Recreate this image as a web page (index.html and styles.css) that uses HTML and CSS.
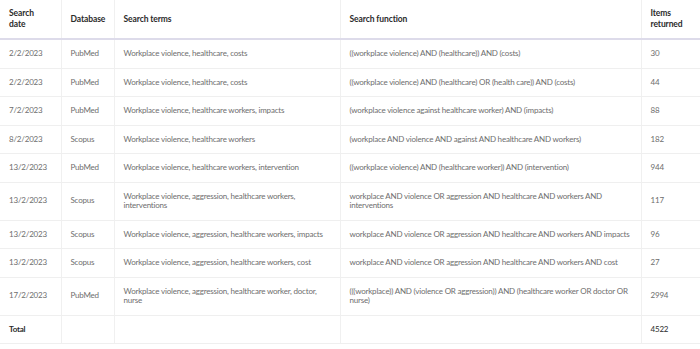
FILE: index.html
```html
<!DOCTYPE html>
<html lang="en">
<head>
<meta charset="utf-8">
<title>Search results</title>
<link rel="stylesheet" href="styles.css">
</head>
<body>
<table class="results">
  <colgroup>
    <col class="c-date">
    <col class="c-db">
    <col class="c-terms">
    <col class="c-func">
    <col class="c-items">
  </colgroup>
  <thead>
    <tr>
      <th>Search date</th>
      <th>Database</th>
      <th>Search terms</th>
      <th>Search function</th>
      <th>Items returned</th>
    </tr>
  </thead>
  <tbody>
    <tr><td>2/2/2023</td><td>PubMed</td><td>Workplace violence, healthcare, costs</td><td>((workplace violence) AND (healthcare)) AND (costs)</td><td>30</td></tr>
    <tr><td>2/2/2023</td><td>PubMed</td><td>Workplace violence, healthcare, costs</td><td>((workplace violence) AND (healthcare) OR (health care)) AND (costs)</td><td>44</td></tr>
    <tr><td>7/2/2023</td><td>PubMed</td><td>Workplace violence, healthcare workers, impacts</td><td>(workplace violence against healthcare worker) AND (impacts)</td><td>88</td></tr>
    <tr><td>8/2/2023</td><td>Scopus</td><td>Workplace violence, healthcare workers</td><td>(workplace AND violence AND against AND healthcare AND workers)</td><td>182</td></tr>
    <tr><td>13/2/2023</td><td>PubMed</td><td>Workplace violence, healthcare workers, intervention</td><td>((workplace violence) AND (healthcare worker)) AND (intervention)</td><td>944</td></tr>
    <tr><td>13/2/2023</td><td>Scopus</td><td>Workplace violence, aggression, healthcare workers, interventions</td><td>workplace AND violence OR aggression AND healthcare AND workers AND interventions</td><td>117</td></tr>
    <tr><td>13/2/2023</td><td>Scopus</td><td>Workplace violence, aggression, healthcare workers, impacts</td><td>workplace AND violence OR aggression AND healthcare AND workers AND impacts</td><td>96</td></tr>
    <tr><td>13/2/2023</td><td>Scopus</td><td>Workplace violence, aggression, healthcare workers, cost</td><td>workplace AND violence OR aggression AND healthcare AND workers AND cost</td><td>27</td></tr>
    <tr><td>17/2/2023</td><td>PubMed</td><td>Workplace violence, aggression, healthcare worker, doctor, nurse</td><td>(((workplace)) AND (violence OR aggression)) AND (healthcare worker OR doctor OR nurse)</td><td>2994</td></tr>
    <tr class="total"><td class="strong">Total</td><td></td><td></td><td></td><td class="sum">4522</td></tr>
  </tbody>
</table>
</body>
</html>
```
FILE: styles.css
```css
html, body {
  margin: 0;
  padding: 0;
  background: #ffffff;
}

.results {
  width: 700px;
  border-collapse: collapse;
  table-layout: fixed;
  font-family: Lato, "Noto Sans", sans-serif;
  font-size: 8px;
  letter-spacing: -0.2px;
}

.c-date { width: 61px; }
.c-db { width: 53px; }
.c-terms { width: 226px; }
.c-func { width: 301px; }
.c-items { width: 59px; }

.results th {
  text-align: left;
  font-weight: 700;
  color: #2b2b2b;
  font-size: 8.5px;
  letter-spacing: -0.1px;
  line-height: 11px;
  padding: 8px 9px;
  border-bottom: 2px solid #dddbea;
  border-right: 1px solid #f0f0f0;
  vertical-align: middle;
}

.results td {
  color: #6e6e6e;
  line-height: 9.5px;
  padding: 9px 9px;
  border-bottom: 1px solid #efefef;
  border-right: 1px solid #f0f0f0;
  vertical-align: middle;
}

.results th:last-child,
.results td:last-child {
  border-right: none;
}

.results td.strong {
  color: #2b2b2b;
  font-weight: 700;
}

.results td.sum {
  color: #2b2b2b;
}
```
